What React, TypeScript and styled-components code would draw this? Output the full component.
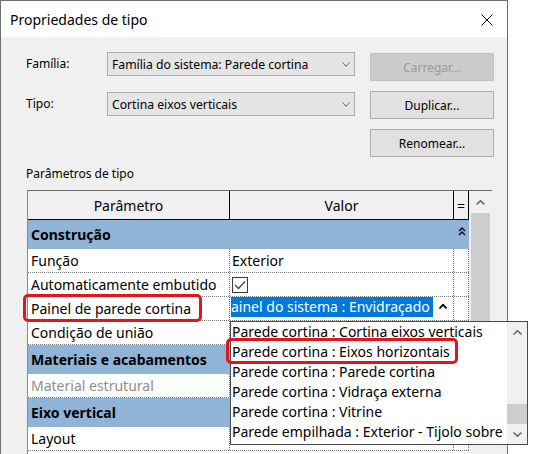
import React from "react";
import styled, { createGlobalStyle } from "styled-components";

const GlobalStyle = createGlobalStyle`
  * { box-sizing: border-box; }
  html, body { margin: 0; padding: 0; background: #ffffff; overflow: hidden; }
  body { font-family: "Noto Sans", "DejaVu Sans", sans-serif; color: #000; }
`;

const Dialog = styled.div`
  width: 508px;
  height: 454px;
  border: 1px solid #6e6e6e;
  border-bottom: 0;
  background: #f0f0f0;
  display: flex;
  flex-direction: column;
`;

const TitleBar = styled.div`
  flex: none;
  height: 36px;
  background: #ffffff;
  display: flex;
  align-items: center;
  justify-content: space-between;
  padding: 1px 14px 0 9px;
`;

const Title = styled.span`
  font-size: 14px;
  line-height: 18px;
`;

const Content = styled.div`
  flex: 1;
  min-height: 0;
  padding: 15px 0 0 25px;
  display: flex;
  flex-direction: column;
`;

const FormGrid = styled.div`
  display: grid;
  grid-template-columns: 66px 248px 124px;
  grid-template-rows: 29px 28px 28px;
  column-gap: 15px;
  row-gap: 10px;
  align-items: start;
`;

const FieldLabel = styled.div<{ $offset?: number }>`
  margin-top: ${(p) => p.$offset ?? 0}px;
  height: 24px;
  line-height: 24px;
  font-size: 12px;
`;

const Combo = styled.div<{ $offset?: number }>`
  margin-top: ${(p) => p.$offset ?? 0}px;
  height: 24px;
  border: 1px solid #acacac;
  background: #e5e5e5;
  display: flex;
  align-items: center;
  justify-content: space-between;
  padding: 0 4px 0 4px;
  font-size: 12.2px;
  white-space: nowrap;
`;

const DialogButton = styled.button<{ $offset?: number; $disabled?: boolean }>`
  grid-column: 3;
  margin: ${(p) => p.$offset ?? 0}px 0 0 0;
  height: 28px;
  padding: 0;
  font-family: inherit;
  font-size: 12px;
  border: 1px solid ${(p) => (p.$disabled ? "#bfbfbf" : "#adadad")};
  background: ${(p) => (p.$disabled ? "#cccccc" : "#e1e1e1")};
  color: ${(p) => (p.$disabled ? "#9a9a9a" : "#000000")};
  display: flex;
  align-items: center;
  justify-content: center;
`;

const SectionLabel = styled.div`
  margin-top: 9px;
  height: 16px;
  line-height: 16px;
  font-size: 12px;
`;

const TableFrame = styled.div`
  flex: 1;
  margin: 8px 0 0 1px;
  width: 465px;
  display: flex;
  border-top: 1px solid #6a6a6a;
  border-left: 1px solid #8a8a8a;
`;

const Grid = styled.div`
  width: 441px;
  background: #ffffff;
  display: flex;
  flex-direction: column;
`;

const COLS = "202px 224px 15px";

const HeaderRow = styled.div`
  flex: none;
  display: grid;
  grid-template-columns: ${COLS};
  height: 29px;
  background: #f0f0f0;
`;

const HeaderCell = styled.div`
  border-right: 1px solid #000;
  border-bottom: 1px solid #000;
  display: flex;
  align-items: center;
  justify-content: center;
  font-size: 14px;
`;

const CategoryRow = styled.div`
  flex: none;
  display: grid;
  grid-template-columns: 426px 15px;
  height: 29px;
  background: #8fb4d6;
`;

const CategoryLabel = styled.div`
  display: flex;
  align-items: center;
  padding-left: 3px;
  font-size: 14px;
  font-weight: 700;
  white-space: nowrap;
`;

const CollapseCell = styled.div`
  display: flex;
  justify-content: center;
  padding-top: 7px;
`;

const Row = styled.div`
  flex: none;
  display: grid;
  grid-template-columns: ${COLS};
  height: 24px;
  border-bottom: 1px dotted #7a7a7a;
`;

const Cell = styled.div<{ $muted?: boolean; $pad?: number }>`
  position: relative;
  display: flex;
  align-items: center;
  padding-left: ${(p) => p.$pad ?? 0}px;
  border-right: 1px dotted #7a7a7a;
  font-size: 14px;
  color: ${(p) => (p.$muted ? "#8d8d8d" : "#000000")};
  white-space: nowrap;
`;

const RedMark = styled.div<{ $top: number; $left: number; $w: number; $h: number }>`
  position: absolute;
  top: ${(p) => p.$top}px;
  left: ${(p) => p.$left}px;
  width: ${(p) => p.$w}px;
  height: ${(p) => p.$h}px;
  border: 3px solid #e3141c;
  border-radius: 5px;
  z-index: 5;
  pointer-events: none;
`;

const CheckBox = styled.div`
  width: 16px;
  height: 16px;
  border: 1px solid #3c3c3c;
  background: #fff;
  display: flex;
  align-items: center;
  justify-content: center;
`;

const Editor = styled.div`
  flex: 1;
  align-self: stretch;
  display: flex;
  align-items: flex-start;
  justify-content: space-between;
  padding-right: 6px;
`;

const Selected = styled.span`
  margin-left: 1px;
  height: 20px;
  line-height: 20px;
  padding-right: 3px;
  background: #0078d7;
  color: #ffffff;
  white-space: nowrap;
`;

const Caret = styled.span`
  margin-top: 7px;
  display: flex;
`;

const VScroll = styled.div`
  width: 23px;
  background: #f0f0f0;
  display: flex;
  flex-direction: column;
`;

const ScrollArrow = styled.div<{ $h: number }>`
  flex: none;
  height: ${(p) => p.$h}px;
  display: flex;
  align-items: center;
  justify-content: center;
`;

const ScrollThumb = styled.div<{ $h: number; $ml: number; $w: number }>`
  flex: none;
  margin-left: ${(p) => p.$ml}px;
  width: ${(p) => p.$w}px;
  height: ${(p) => p.$h}px;
  background: #cdcdcd;
`;

const Dropdown = styled.div`
  position: absolute;
  top: calc(100% + 1px);
  left: 0;
  width: 298px;
  height: 124px;
  border: 1px solid #4a4a4a;
  background: #ffffff;
  display: flex;
  z-index: 10;
`;

const List = styled.div`
  flex: 1;
  min-width: 0;
  padding-bottom: 2px;
  display: flex;
  flex-direction: column;
`;

const Item = styled.div`
  position: relative;
  height: 20px;
  line-height: 20px;
  font-size: 14px;
  padding-left: 1px;
`;

const ItemText = styled.span`
  display: block;
  overflow: hidden;
  white-space: nowrap;
`;

const DropScroll = styled.div`
  flex: none;
  width: 20px;
  background: #f0f0f0;
  display: flex;
  flex-direction: column;
`;

const Track = styled.div`
  flex: 1;
  display: flex;
  flex-direction: column;
  justify-content: flex-end;
`;

const Chevron = ({ up, color = "#606060", w = 9, h = 5, sw = 1.4 }: { up?: boolean; color?: string; w?: number; h?: number; sw?: number }) => (
  <svg width={w} height={h} viewBox={`0 0 ${w} ${h}`}>
    <polyline
      points={up ? `0.5,${h - 0.5} ${w / 2},0.7 ${w - 0.5},${h - 0.5}` : `0.5,0.5 ${w / 2},${h - 0.7} ${w - 0.5},0.5`}
      fill="none"
      stroke={color}
      strokeWidth={sw}
    />
  </svg>
);

const DoubleChevron = () => (
  <svg width="8" height="9" viewBox="0 0 8 9">
    <polyline points="1,4 4,1 7,4" fill="none" stroke="#000" strokeWidth="1.4" />
    <polyline points="1,8 4,5 7,8" fill="none" stroke="#000" strokeWidth="1.4" />
  </svg>
);

const options = [
  "Parede cortina : Cortina eixos verticais",
  "Parede cortina : Eixos horizontais",
  "Parede cortina : Parede cortina",
  "Parede cortina : Vidraça externa",
  "Parede cortina : Vitrine",
  "Parede empilhada : Exterior - Tijolo sobre bloco",
];

export default function App() {
  return (
    <>
      <GlobalStyle />
      <Dialog>
        <TitleBar>
          <Title>Propriedades de tipo</Title>
          <svg width="12" height="12" viewBox="0 0 12 12">
            <path d="M0.5 0.5 L11.5 11.5 M11.5 0.5 L0.5 11.5" stroke="#000" strokeWidth="1" />
          </svg>
        </TitleBar>
        <Content>
          <FormGrid>
            <FieldLabel>Família:</FieldLabel>
            <Combo>
              <span>Família do sistema: Parede cortina</span>
              <Chevron w={8} h={5} sw={1} />
            </Combo>
            <DialogButton $offset={1} $disabled>
              Carregar...
            </DialogButton>
            <FieldLabel $offset={1}>Tipo:</FieldLabel>
            <Combo $offset={1}>
              <span>Cortina eixos verticais</span>
              <Chevron w={8} h={5} sw={1} />
            </Combo>
            <DialogButton>Duplicar...</DialogButton>
            <DialogButton>Renomear...</DialogButton>
          </FormGrid>
          <SectionLabel>Parâmetros de tipo</SectionLabel>
          <TableFrame>
            <Grid>
              <HeaderRow>
                <HeaderCell>Parâmetro</HeaderCell>
                <HeaderCell>Valor</HeaderCell>
                <HeaderCell>=</HeaderCell>
              </HeaderRow>
              <CategoryRow>
                <CategoryLabel>Construção</CategoryLabel>
                <CollapseCell>
                  <DoubleChevron />
                </CollapseCell>
              </CategoryRow>
              <Row>
                <Cell $pad={3}>Função</Cell>
                <Cell $pad={2}>Exterior</Cell>
                <Cell />
              </Row>
              <Row>
                <Cell $pad={3}>Automaticamente embutido</Cell>
                <Cell $pad={2}>
                  <CheckBox>
                    <svg width="12" height="10" viewBox="0 0 12 10">
                      <polyline points="1,5 4.5,8.5 11,1.5" fill="none" stroke="#444" strokeWidth="1.3" />
                    </svg>
                  </CheckBox>
                </Cell>
                <Cell />
              </Row>
              <Row>
                <Cell $pad={3}>
                  Painel de parede cortina
                  <RedMark $top={-3} $left={-5} $w={179} $h={28} />
                </Cell>
                <Cell>
                  <Editor>
                    <Selected>ainel do sistema : Envidraçado</Selected>
                    <Caret>
                      <Chevron up color="#000" w={8} h={5} sw={1.8} />
                    </Caret>
                  </Editor>
                  <Dropdown>
                    <List>
                      {options.map((o, i) => (
                        <Item key={o}>
                          <ItemText>{o}</ItemText>
                          {i === 1 && <RedMark $top={-4} $left={-5} $w={232} $h={26} />}
                        </Item>
                      ))}
                    </List>
                    <DropScroll>
                      <ScrollArrow $h={21}>
                        <Chevron up />
                      </ScrollArrow>
                      <Track>
                        <ScrollThumb $h={20} $ml={0} $w={20} />
                      </Track>
                      <ScrollArrow $h={20}>
                        <Chevron />
                      </ScrollArrow>
                    </DropScroll>
                  </Dropdown>
                </Cell>
                <Cell />
              </Row>
              <Row>
                <Cell $pad={3}>Condição de união</Cell>
                <Cell />
                <Cell />
              </Row>
              <CategoryRow>
                <CategoryLabel>Materiais e acabamentos</CategoryLabel>
                <CollapseCell />
              </CategoryRow>
              <Row>
                <Cell $pad={3} $muted>
                  Material estrutural
                </Cell>
                <Cell />
                <Cell />
              </Row>
              <CategoryRow>
                <CategoryLabel>Eixo vertical</CategoryLabel>
                <CollapseCell />
              </CategoryRow>
              <Row>
                <Cell $pad={3}>Layout</Cell>
                <Cell />
                <Cell />
              </Row>
            </Grid>
            <VScroll>
              <ScrollArrow $h={22}>
                <Chevron up />
              </ScrollArrow>
              <ScrollThumb $h={227} $ml={2} $w={19} />
            </VScroll>
          </TableFrame>
        </Content>
      </Dialog>
    </>
  );
}
